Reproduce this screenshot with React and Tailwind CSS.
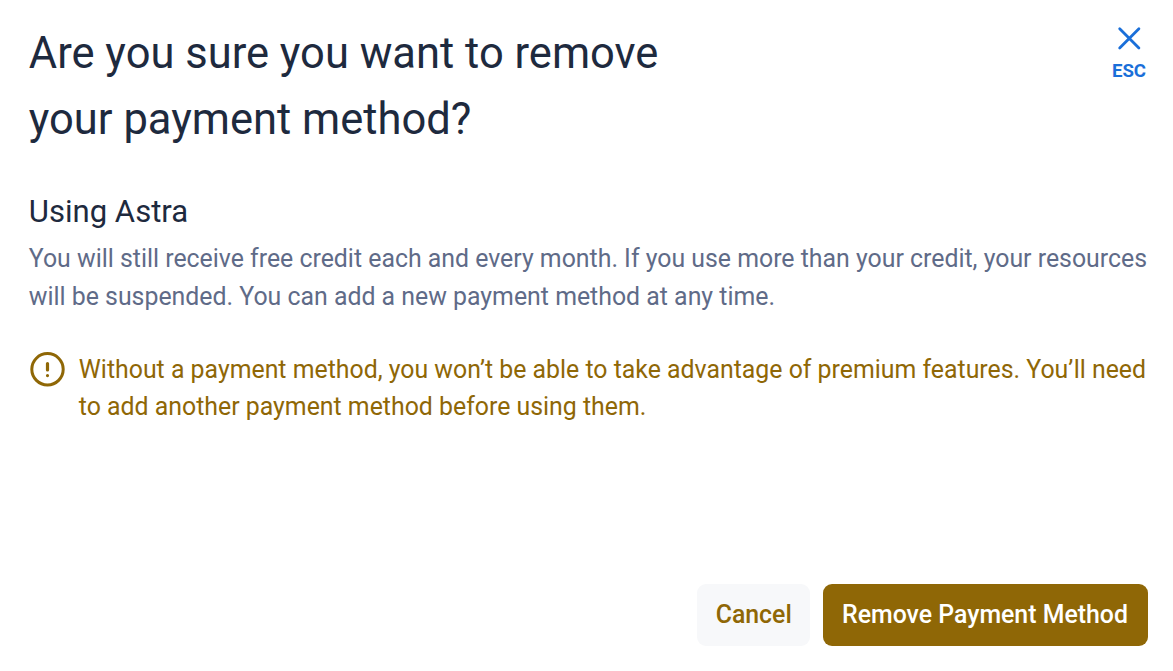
export default function App() {
  return (
    <main className="flex h-[671px] w-[1173px] flex-col bg-white pt-[21.4px] pr-[25px] pb-[25px] pl-[28.8px] font-['Roboto',sans-serif]">
      <header className="flex items-start justify-between">
        <h1 className="text-[43.5px] leading-[65.3px] text-[#1e2a3e]">
          Are you sure you want to remove
          <br />
          your payment method?
        </h1>
        <button className="mt-[4.6px] flex w-[38px] flex-col items-center text-[#1a6fd9]">
          <svg className="h-6 w-6" viewBox="0 0 24 24" fill="none" stroke="currentColor" strokeWidth="2.8" strokeLinecap="round">
            <path d="M2.7 2.7L21.9 21.9M21.9 2.7L2.7 21.9" />
          </svg>
          <span className="mt-[9px] text-[18.65px] leading-6 font-bold">ESC</span>
        </button>
      </header>
      <section className="mt-[37.3px]">
        <h2 className="text-[31.08px] leading-[46px] text-[#1e2a3e]">Using Astra</h2>
        <p className="mt-[5px] text-[24.87px] leading-[37.4px] whitespace-nowrap text-[#5f6b88]">
          You will still receive free credit each and every month. If you use more than your credit, your resources
          <br />
          will be suspended. You can add a new payment method at any time.
        </p>
      </section>
      <div className="mt-[36px] flex gap-[14px] text-[#8f6706]">
        <svg className="mt-[1px] h-9 w-9 shrink-0" viewBox="0 0 36 36" fill="none" stroke="currentColor" strokeWidth="3">
          <circle cx="18.5" cy="17.3" r="15.7" />
          <path d="M18.5 11.5V17.9M18.5 23.6V23.61" strokeWidth="3.2" strokeLinecap="round" />
        </svg>
        <p className="text-[24.87px] leading-[37.3px] whitespace-nowrap">
          Without a payment method, you won’t be able to take advantage of premium features. You’ll need
          <br />
          to add another payment method before using them.
        </p>
      </div>
      <footer className="mt-auto flex justify-end gap-[12.6px] text-[24.87px] font-medium">
        <button className="h-[62px] w-[113.4px] rounded-[9px] bg-[#f7f8fa] text-[#8f6706]">Cancel</button>
        <button className="h-[62px] w-[325px] rounded-[9px] bg-[#8f6706] pr-[1px] text-white">Remove Payment Method</button>
      </footer>
    </main>
  );
}
